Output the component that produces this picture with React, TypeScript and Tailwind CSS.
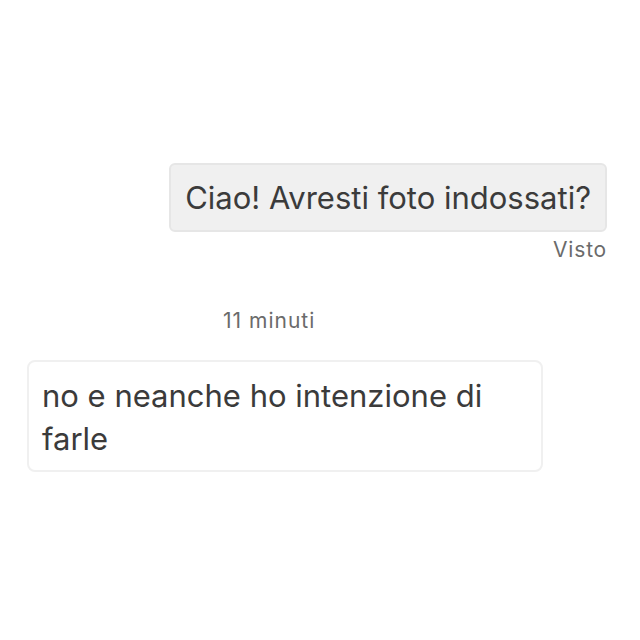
export default function App() {
  return (
    <div className="w-[640px] h-[640px] bg-white font-['Inter',sans-serif] text-[#3b3b3b]">
      <div className="pt-[163px] flex flex-col">
        {/* sent */}
        <div className="flex flex-col items-end pr-[33px]">
          <div className="rounded-[6px] bg-[#f0f0f0] border-2 border-[#e6e6e6] px-[14px] h-[69px] flex items-center text-[31px] leading-none">
            Ciao! Avresti foto indossati?
          </div>
          <div className="mt-[7px] text-[21px] text-[#6b6b6b] leading-none tracking-[0.8px]">Visto</div>
        </div>

        {/* time */}
        <div className="mt-[50px] pl-[223px] text-[21px] text-[#6b6b6b] leading-none tracking-[1px]">11 minuti</div>

        {/* received */}
        <div className="mt-[29px] pl-[27px]">
          <div className="w-[516px] h-[112px] rounded-[8px] border-2 border-[#f0f0f0] bg-white px-[13px] pt-[12px] text-[31px] leading-[43px]">
            no e neanche ho intenzione di farle
          </div>
        </div>
      </div>
    </div>
  )
}
